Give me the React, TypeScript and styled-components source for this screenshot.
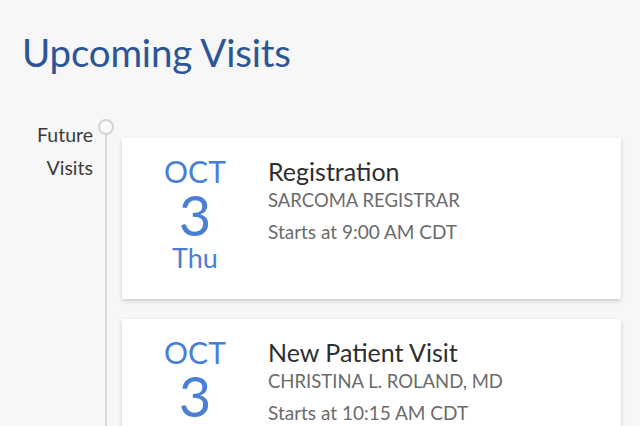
import React from "react";
import styled, { createGlobalStyle } from "styled-components";

const Global = createGlobalStyle`
  html, body { margin: 0; padding: 0; background: #f7f7f8; }
  body { font-family: "Lato", "Open Sans", sans-serif; width: 640px; height: 426px; overflow: hidden; }
`;

const Page = styled.div`
  padding: 28px 19px 0 0;
`;

const Title = styled.h1`
  margin: 0 0 0 22px;
  font-weight: 400;
  font-size: 38.5px;
  line-height: 48px;
  color: #2c5596;
  letter-spacing: -0.2px;
`;

const Timeline = styled.div`
  display: flex;
  margin-top: 50px;
`;

const LabelCol = styled.div`
  width: 93px;
  flex: none;
  text-align: right;
  font-size: 19.5px;
  line-height: 33px;
  color: #3a3a3a;
  margin-top: -8px;
`;

const Rail = styled.div`
  position: relative;
  flex: 1;
  margin-left: 12px;
  border-left: 2px solid #d9d9d9;
  padding: 12px 0 0 15px;
  display: flex;
  flex-direction: column;
  gap: 20px;
`;

const Marker = styled.span`
  position: absolute;
  left: -9px;
  top: -7px;
  width: 12px;
  height: 12px;
  border-radius: 50%;
  border: 2px solid #d4d4d4;
  background: #fafafa;
`;

const Card = styled.div`
  background: #fff;
  height: 161px;
  box-shadow: 0 2px 4px rgba(0, 0, 0, 0.18);
  display: flex;
  padding-left: 30px;
`;

const DateCol = styled.div`
  width: 86px;
  flex: none;
  display: flex;
  flex-direction: column;
  align-items: center;
  color: #4a7fd6;
  padding-top: 16px;
`;

const Month = styled.div`
  font-size: 30px;
  line-height: 34px;
`;

const Day = styled.div`
  font-size: 56px;
  line-height: 50px;
  margin-top: 2px;
`;

const Weekday = styled.div`
  font-size: 27px;
  line-height: 32px;
  margin-top: 2px;
`;

const Info = styled.div`
  margin-left: 30px;
  padding-top: 18px;
  display: flex;
  flex-direction: column;
`;

const VisitName = styled.div`
  font-size: 25px;
  line-height: 30px;
  color: #2e2e2e;
`;

const Provider = styled.div`
  font-size: 18.5px;
  line-height: 28px;
  color: #6b6b6b;
  text-transform: uppercase;
`;

const Time = styled.div`
  font-size: 19px;
  line-height: 36px;
  color: #6b6b6b;
`;

const visits = [
  { month: "OCT", day: "3", weekday: "Thu", name: "Registration", provider: "SARCOMA REGISTRAR", time: "Starts at 9:00 AM CDT" },
  { month: "OCT", day: "3", weekday: "Thu", name: "New Patient Visit", provider: "CHRISTINA L. ROLAND, MD", time: "Starts at 10:15 AM CDT" },
];

export default function App() {
  return (
    <>
      <Global />
      <Page>
        <Title>Upcoming Visits</Title>
        <Timeline>
          <LabelCol>
            Future
            <br />
            Visits
          </LabelCol>
          <Rail>
            <Marker />
            {visits.map((v, i) => (
              <Card key={i}>
                <DateCol>
                  <Month>{v.month}</Month>
                  <Day>{v.day}</Day>
                  <Weekday>{v.weekday}</Weekday>
                </DateCol>
                <Info>
                  <VisitName>{v.name}</VisitName>
                  <Provider>{v.provider}</Provider>
                  <Time>{v.time}</Time>
                </Info>
              </Card>
            ))}
          </Rail>
        </Timeline>
      </Page>
    </>
  );
}
